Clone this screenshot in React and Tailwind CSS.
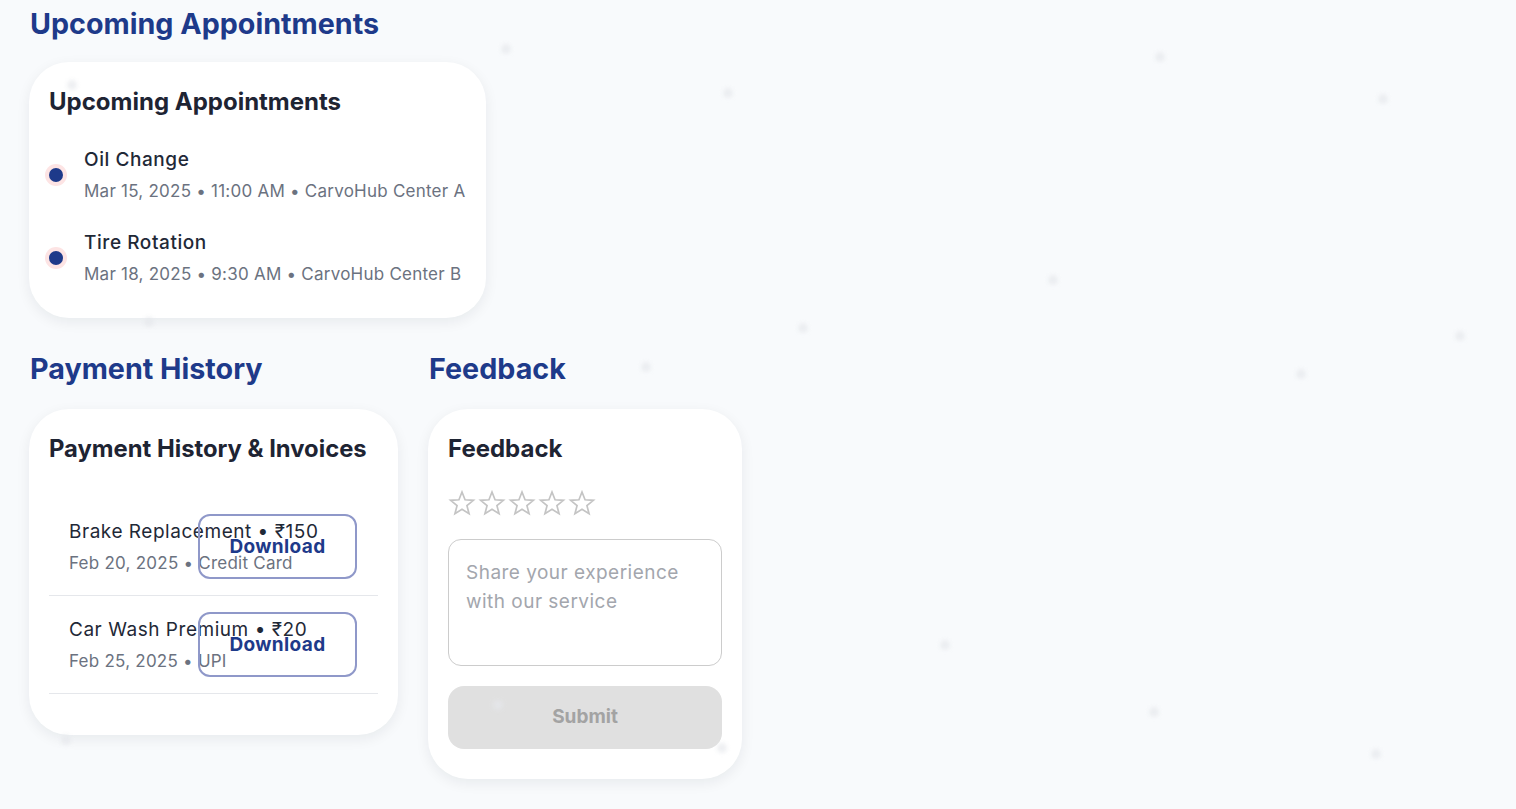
import React from "react";

const dots = [
  [506, 49], [728, 93], [1160, 57], [1383, 99], [72, 85], [149, 322],
  [803, 328], [1053, 280], [1460, 336], [646, 367], [1301, 374],
  [945, 645], [1154, 712], [1376, 754], [498, 705], [722, 748], [66, 740],
];

function Star() {
  const pts = [];
  for (let i = 0; i < 10; i++) {
    const r = i % 2 === 0 ? 12 : 5.2;
    const a = -Math.PI / 2 + (i * Math.PI) / 5;
    pts.push(`${(14 + r * Math.cos(a)).toFixed(2)},${(15 + r * Math.sin(a)).toFixed(2)}`);
  }
  return (
    <svg width="28" height="28" viewBox="0 0 28 28">
      <polygon points={pts.join(" ")} fill="none" stroke="#c4c4c4" strokeWidth="1.7" strokeLinejoin="miter" />
    </svg>
  );
}

function Appt({ title, sub }) {
  return (
    <div className="flex items-center">
      <div className="w-[14px] h-[14px] rounded-full bg-[#1e3a8a] shadow-[0_0_0_4px_#fde4e4] shrink-0" />
      <div className="ml-[21px]">
        <div className="text-[19px] leading-[28px] font-medium tracking-[0.03em] text-[#1f2937]">{title}</div>
        <div className="mt-[5px] text-[17px] leading-[24px] tracking-[0.014em] text-[#6b7280]">{sub}</div>
      </div>
    </div>
  );
}

function PayRow({ title, sub }) {
  return (
    <div className="flex items-center pl-5 pr-[21px] py-4 border-b border-[#e5e7eb]">
      <div className="w-[129px] shrink-0 whitespace-nowrap">
        <div className="text-[19px] leading-[28px] tracking-[0.028em] text-[#1f2937]">{title}</div>
        <div className="mt-[5px] text-[17px] leading-[24px] tracking-[0.014em] text-[#6b7280]">{sub}</div>
      </div>
      <button className="w-[159px] h-[65px] shrink-0 rounded-xl border-2 border-[#8f98c9] bg-transparent text-[19px] font-bold tracking-[0.02em] text-[#1e3a8a] leading-[24px] pt-px">
        Download
      </button>
    </div>
  );
}

export default function App() {
  return (
    <div className="relative min-h-[809px] w-full bg-[#f8fafc] font-['Inter',sans-serif] pl-[29px] pt-[6px] overflow-hidden">
      <h2 className="ml-px text-[28.7px] leading-[35px] font-bold text-[#1e3a8a]">Upcoming Appointments</h2>
      <div className="mt-[21px] w-[457px] rounded-[40px] bg-white shadow-[0_4px_14px_rgba(15,23,42,0.07)] px-5 pt-6 pb-[32px]">
        <h3 className="text-[24px] leading-[32px] font-bold text-[#1e2433]">Upcoming Appointments</h3>
        <div className="mt-[28px] flex flex-col gap-[26px]">
          <Appt title="Oil Change" sub="Mar 15, 2025 • 11:00 AM • CarvoHub Center A" />
          <Appt title="Tire Rotation" sub="Mar 18, 2025 • 9:30 AM • CarvoHub Center B" />
        </div>
      </div>

      <div className="mt-[33px] flex items-start gap-[30px]">
        <div className="w-[369px]">
          <h2 className="ml-px text-[28.7px] leading-[35px] font-bold text-[#1e3a8a]">Payment History</h2>
          <div className="mt-[23px] rounded-[40px] bg-white shadow-[0_4px_14px_rgba(15,23,42,0.07)] px-5 pt-6 pb-[41px]">
            <h3 className="text-[23.8px] leading-[32px] font-bold text-[#1e2433] whitespace-nowrap">Payment History &amp; Invoices</h3>
            <div className="mt-[33px]">
              <PayRow title="Brake Replacement • ₹150" sub="Feb 20, 2025 • Credit Card" />
              <PayRow title="Car Wash Premium • ₹20" sub="Feb 25, 2025 • UPI" />
            </div>
          </div>
        </div>

        <div className="w-[314px]">
          <h2 className="ml-px text-[28.7px] leading-[35px] font-bold text-[#1e3a8a]">Feedback</h2>
          <div className="mt-[23px] rounded-[40px] bg-white shadow-[0_4px_14px_rgba(15,23,42,0.07)] px-5 pt-6 pb-[30px]">
            <h3 className="text-[24px] leading-[32px] font-bold text-[#1e2433]">Feedback</h3>
            <div className="mt-[24px] flex gap-[2px]">
              <Star /><Star /><Star /><Star /><Star />
            </div>
            <textarea
              className="mt-[22px] block w-full h-[127px] resize-none rounded-[13px] border border-[#cccccc] px-[17px] py-[18px] text-[19px] leading-[29px] tracking-[0.025em] text-[#1f2937] placeholder:text-[#a3a6ad] outline-none font-['Inter',sans-serif]"
              placeholder="Share your experience with our service"
            />
            <button className="mt-[20px] w-full h-[63px] rounded-2xl bg-[#e0e0e0] text-[19px] font-bold text-[#a3a3a3]">
              Submit
            </button>
          </div>
        </div>
      </div>

      {dots.map(([x, y], i) => (
        <div
          key={i}
          className="absolute w-[10px] h-[10px] rounded-full bg-[#e6e8ec] blur-[2px] opacity-70 pointer-events-none"
          style={{ left: x - 5, top: y - 5 }}
        />
      ))}
    </div>
  );
}
